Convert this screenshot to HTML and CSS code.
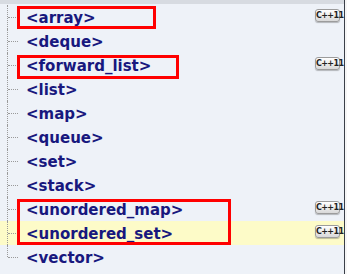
FILE: index.html
```html
<!DOCTYPE html>
<html>
<head>
<meta charset="utf-8">
<link rel="stylesheet" href="styles.css">
</head>
<body>
<div class="panel">
  <div class="topbar"></div>
  <ul class="tree">
    <li class="row"><span class="branch"></span><span class="label">&lt;array&gt;</span><span class="badge">C++11</span></li>
    <li class="row"><span class="branch"></span><span class="label">&lt;deque&gt;</span></li>
    <li class="row"><span class="branch"></span><span class="label">&lt;forward_list&gt;</span><span class="badge">C++11</span></li>
    <li class="row"><span class="branch"></span><span class="label">&lt;list&gt;</span></li>
    <li class="row"><span class="branch"></span><span class="label">&lt;map&gt;</span></li>
    <li class="row"><span class="branch"></span><span class="label">&lt;queue&gt;</span></li>
    <li class="row"><span class="branch"></span><span class="label">&lt;set&gt;</span></li>
    <li class="row"><span class="branch"></span><span class="label">&lt;stack&gt;</span></li>
    <li class="row"><span class="branch"></span><span class="label">&lt;unordered_map&gt;</span><span class="badge">C++11</span></li>
    <li class="row row-selected"><span class="branch"></span><span class="label">&lt;unordered_set&gt;</span><span class="badge">C++11</span></li>
    <li class="row row-last"><span class="branch"></span><span class="label">&lt;vector&gt;</span></li>
  </ul>
  <div class="mark mark-array"></div>
  <div class="mark mark-forward"></div>
  <div class="mark mark-unordered"></div>
</div>
</body>
</html>
```
FILE: styles.css
```css
html, body {
  margin: 0;
  padding: 0;
}
body {
  background: #f6f6f6;
  width: 347px;
  height: 274px;
  overflow: hidden;
}
.panel {
  position: relative;
  width: 344px;
  height: 274px;
  background: #eef2f8;
  border-right: 1px solid #3a3f48;
}
.topbar {
  height: 4px;
  background: #d7dbe1;
}
.tree {
  list-style: none;
  margin: 0;
  padding: 1px 0 0 0;
}
.row {
  display: flex;
  align-items: center;
  height: 24px;
  padding-right: 4px;
}
.row-selected {
  background: #fdfbc8;
}
.branch {
  position: relative;
  flex: none;
  width: 26px;
  height: 24px;
}
.branch::before {
  content: "";
  position: absolute;
  left: 7px;
  top: 0;
  height: 24px;
  border-left: 1px dotted #9a9a9a;
}
.row-last .branch::before {
  height: 12px;
}
.branch::after {
  content: "";
  position: absolute;
  left: 8px;
  top: 12px;
  width: 10px;
  border-top: 1px dotted #9a9a9a;
}
.label {
  font-family: "DejaVu Sans", Verdana, sans-serif;
  font-weight: bold;
  font-size: 15px;
  line-height: 18px;
  padding-top: 2px;
  color: #18187e;
  white-space: nowrap;
}
.badge {
  margin-left: auto;
  margin-top: -3px;
  width: 25px;
  height: 13px;
  box-sizing: border-box;
  border: 1px solid #9c9c9c;
  border-radius: 3px;
  background: linear-gradient(#ffffff, #d9d9d9);
  box-shadow: 0 1px 1px rgba(0,0,0,0.25);
  font-family: "DejaVu Sans", sans-serif;
  font-weight: bold;
  font-size: 8px;
  line-height: 11px;
  letter-spacing: -0.6px;
  color: #222;
  text-align: center;
}
.mark {
  position: absolute;
  box-sizing: border-box;
  border: 3px solid #ff0000;
}
.mark-array {
  left: 17px;
  top: 6px;
  width: 139px;
  height: 23px;
}
.mark-forward {
  left: 17px;
  top: 55px;
  width: 162px;
  height: 24px;
}
.mark-unordered {
  left: 17px;
  top: 199px;
  width: 214px;
  height: 46px;
}
```
